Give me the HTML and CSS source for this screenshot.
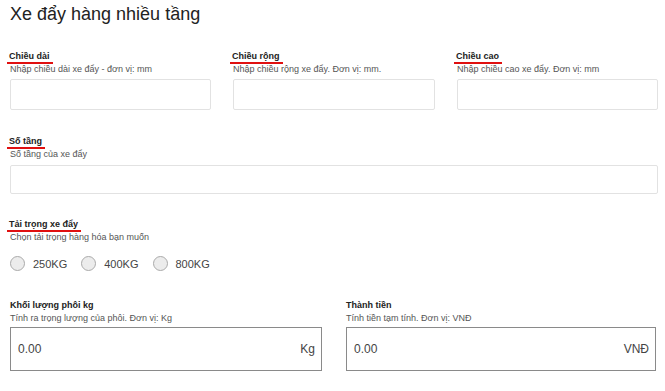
FILE: index.html
```html
<!DOCTYPE html>
<html lang="vi">
<head>
<meta charset="utf-8">
<link rel="stylesheet" href="styles.css">
</head>
<body>
<div class="page">
  <h1 class="title">Xe đẩy hàng nhiều tầng</h1>

  <div class="row3">
    <div class="field">
      <div class="label mark">Chiều dài</div>
      <div class="desc">Nhập chiều dài xe đẩy - đơn vị: mm</div>
      <div class="input"></div>
    </div>
    <div class="field">
      <div class="label mark">Chiều rộng</div>
      <div class="desc">Nhập chiều rộng xe đẩy. Đơn vị: mm.</div>
      <div class="input"></div>
    </div>
    <div class="field">
      <div class="label mark">Chiều cao</div>
      <div class="desc">Nhập chiều cao xe đẩy. Đơn vị: mm</div>
      <div class="input"></div>
    </div>
  </div>

  <div class="field full">
    <div class="label mark">Số tầng</div>
    <div class="desc">Số tầng của xe đẩy</div>
    <div class="input thin"></div>
  </div>

  <div class="field load">
    <div class="label mark">Tải trọng xe đẩy</div>
    <div class="desc">Chọn tải trọng hàng hóa bạn muốn</div>
    <div class="radios">
      <span class="radio"><span class="dot"></span>250KG</span>
      <span class="radio"><span class="dot"></span>400KG</span>
      <span class="radio"><span class="dot"></span>800KG</span>
    </div>
  </div>

  <div class="row2">
    <div class="field">
      <div class="label">Khối lượng phôi kg</div>
      <div class="desc">Tính ra trọng lượng của phôi. Đơn vị: Kg</div>
      <div class="output"><span>0.00</span><span>Kg</span></div>
    </div>
    <div class="field">
      <div class="label">Thành tiền</div>
      <div class="desc">Tính tiền tạm tính. Đơn vị: VNĐ</div>
      <div class="output"><span>0.00</span><span>VNĐ</span></div>
    </div>
  </div>
</div>
</body>
</html>
```
FILE: styles.css
```css
* { box-sizing: border-box; }
body {
  margin: 0;
  background: #fff;
  font-family: "Liberation Sans", Arial, sans-serif;
  color: #222;
}
.page {
  padding: 0 7px 0 10px;
}
.title {
  margin: 0;
  padding-top: 3px;
  font-size: 18px;
  font-weight: normal;
  color: #222;
  line-height: 22px;
}
.row3 {
  display: grid;
  grid-template-columns: 201px 202px 201px;
  column-gap: 22px;
  margin-top: 20px;
}
.label {
  font-size: 9px;
  font-weight: bold;
  color: #222;
  line-height: 11px;
  height: 13px;
}
.label.mark {
  display: inline-block;
  padding: 0 3px 0 2px;
  margin-left: -3px;
  border-bottom: 2px solid #e01010;
}
.desc {
  font-size: 9px;
  color: #555;
  line-height: 11px;
  margin-top: 0;
}
.input {
  margin-top: 4px;
  height: 31px;
  border: 1px solid #e2e2e2;
  border-radius: 2px;
}
.input.thin { height: 29px; margin-top: 5px; }
.full { margin-top: 20px; }
.load { margin-top: 19px; }
.radios {
  display: flex;
  gap: 14px;
  margin-top: 13px;
  font-size: 11px;
  color: #444;
}
.radio {
  display: flex;
  align-items: center;
  gap: 8px;
}
.dot {
  width: 15px;
  height: 15px;
  border-radius: 50%;
  border: 1px solid #aaa;
  background: #ececec;
}
.row2 {
  display: grid;
  grid-template-columns: 312px 310px;
  column-gap: 24px;
  margin-top: 29px;
}
.row2 .label { height: 11px; }
.row2 .desc { margin-top: 2px; }
.output {
  margin-top: 3px;
  height: 44px;
  border: 1px solid #8a8a8a;
  display: flex;
  justify-content: space-between;
  align-items: center;
  padding: 0 6px 0 7px;
  font-size: 12px;
  color: #444;
}
```
